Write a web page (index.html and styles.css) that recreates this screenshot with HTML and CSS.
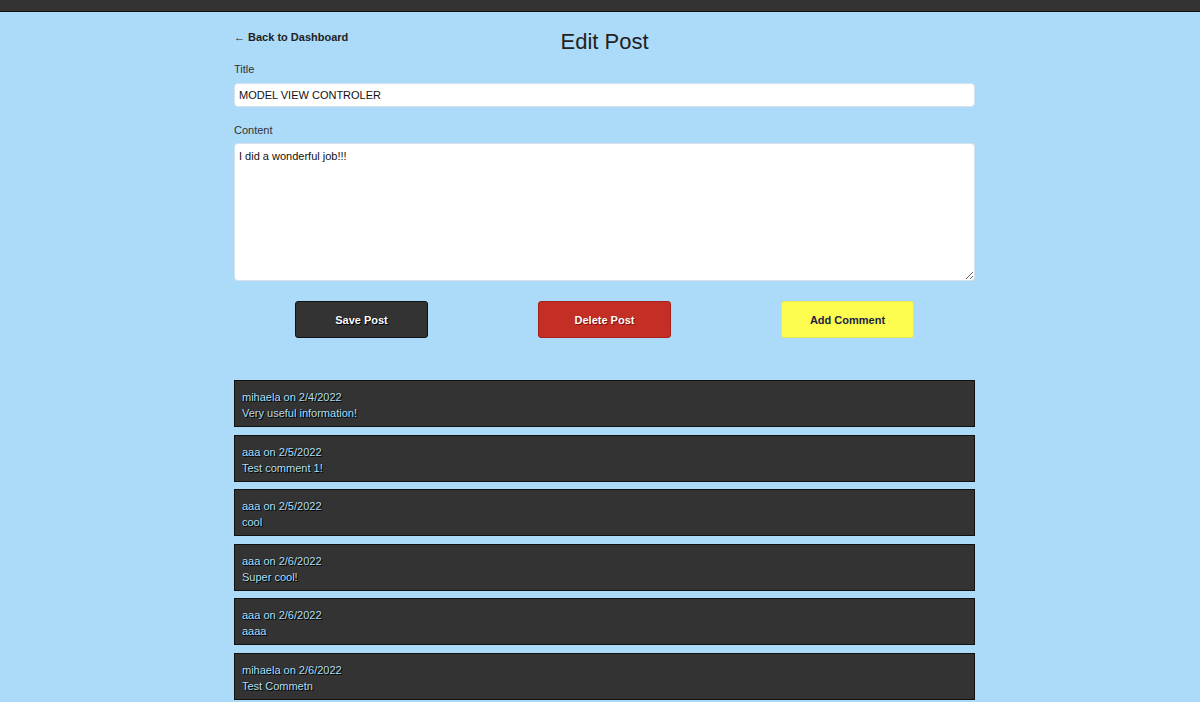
FILE: index.html
```html
<!DOCTYPE html>
<html lang="en">
<head>
<meta charset="utf-8">
<title>Edit Post</title>
<link rel="stylesheet" href="styles.css">
</head>
<body>
<div class="topbar"></div>
<main class="container">
  <div class="header">
    <a class="back" href="#">← Back to Dashboard</a>
    <h2 class="page-title">Edit Post</h2>
    <span></span>
  </div>
  <form class="post-form">
    <label class="label label-title" for="title">Title</label>
    <input class="input" id="title" type="text" value="MODEL VIEW CONTROLER">
    <label class="label label-content" for="content">Content</label>
    <textarea class="textarea" id="content">I did a wonderful job!!!</textarea>
    <div class="actions">
      <button type="button" class="btn btn-save">Save Post</button>
      <button type="button" class="btn btn-delete">Delete Post</button>
      <button type="button" class="btn btn-add">Add Comment</button>
    </div>
  </form>
  <section class="comments">
    <div class="comment"><div>mihaela on 2/4/2022</div><div>Very useful information!</div></div>
    <div class="comment"><div>aaa on 2/5/2022</div><div>Test comment 1!</div></div>
    <div class="comment"><div>aaa on 2/5/2022</div><div>cool</div></div>
    <div class="comment"><div>aaa on 2/6/2022</div><div>Super cool!</div></div>
    <div class="comment"><div>aaa on 2/6/2022</div><div>aaaa</div></div>
    <div class="comment"><div>mihaela on 2/6/2022</div><div>Test Commetn</div></div>
  </section>
</main>
</body>
</html>
```

FILE: styles.css
```css
* { box-sizing: border-box; }
html, body {
  margin: 0;
  padding: 0;
  background: #acdbf9;
  font-family: "Liberation Sans", Arial, Helvetica, sans-serif;
  color: #222;
}
.topbar {
  height: 12px;
  background: #333;
  border-bottom: 1px solid #111;
}
.container {
  width: 741px;
  margin-left: calc(50% - 366px);
  padding-top: 17px;
}
.header {
  display: grid;
  grid-template-columns: 1fr auto 1fr;
  align-items: start;
}
.back {
  font-size: 11px;
  font-weight: bold;
  line-height: 15px;
  color: #222;
  text-decoration: none;
  margin-top: 1px;
}
.page-title {
  margin: 0;
  font-size: 22px;
  font-weight: normal;
  line-height: 26px;
  color: #222;
}
.post-form {
  display: flex;
  flex-direction: column;
  margin-top: 7px;
}
.label {
  font-size: 11px;
  line-height: 14px;
  color: #333;
  margin-bottom: 6px;
}
.label-title { margin-bottom: 7px; }
.label-content { margin-top: 16px; }
.input, .textarea {
  width: 100%;
  background: #fff;
  border: 1px solid #d8e2ea;
  border-radius: 4px;
  font-family: "Liberation Sans", Arial, Helvetica, sans-serif;
  font-size: 11px;
  color: #111;
  padding: 4px 4px;
}
.input { height: 24px; }
.textarea {
  height: 138px;
  resize: vertical;
  padding: 6px 4px;
  line-height: 13px;
}
.actions {
  display: flex;
  justify-content: center;
  gap: 110px;
  margin-top: 20px;
}
.btn {
  width: 133px;
  height: 37px;
  border-radius: 3px;
  font-family: "Liberation Sans", Arial, Helvetica, sans-serif;
  font-size: 11px;
  font-weight: bold;
  cursor: pointer;
}
.btn-save {
  background: #333;
  border: 1px solid #111;
  color: #fff;
  text-shadow: 0 0 1px #000, 1px 1px 0 #000;
}
.btn-delete {
  background: #c42f25;
  border: 1px solid #a81e18;
  color: #fff;
  text-shadow: 0 0 1px #8a0d08, 1px 1px 0 #8a0d08;
}
.btn-add {
  background: #fdfd4f;
  border: 1px solid #e8e850;
  color: #1c1c44;
}
.comments {
  margin-top: 42px;
  display: flex;
  flex-direction: column;
  gap: 7.6px;
}
.comment {
  background: #333;
  border: 1px solid #111;
  padding: 8px 7px 5px;
  font-size: 11px;
  line-height: 16px;
  color: #b8e0fb;
  text-shadow: 1px 1px 0 #000, 0 0 1px #000;
}
```
